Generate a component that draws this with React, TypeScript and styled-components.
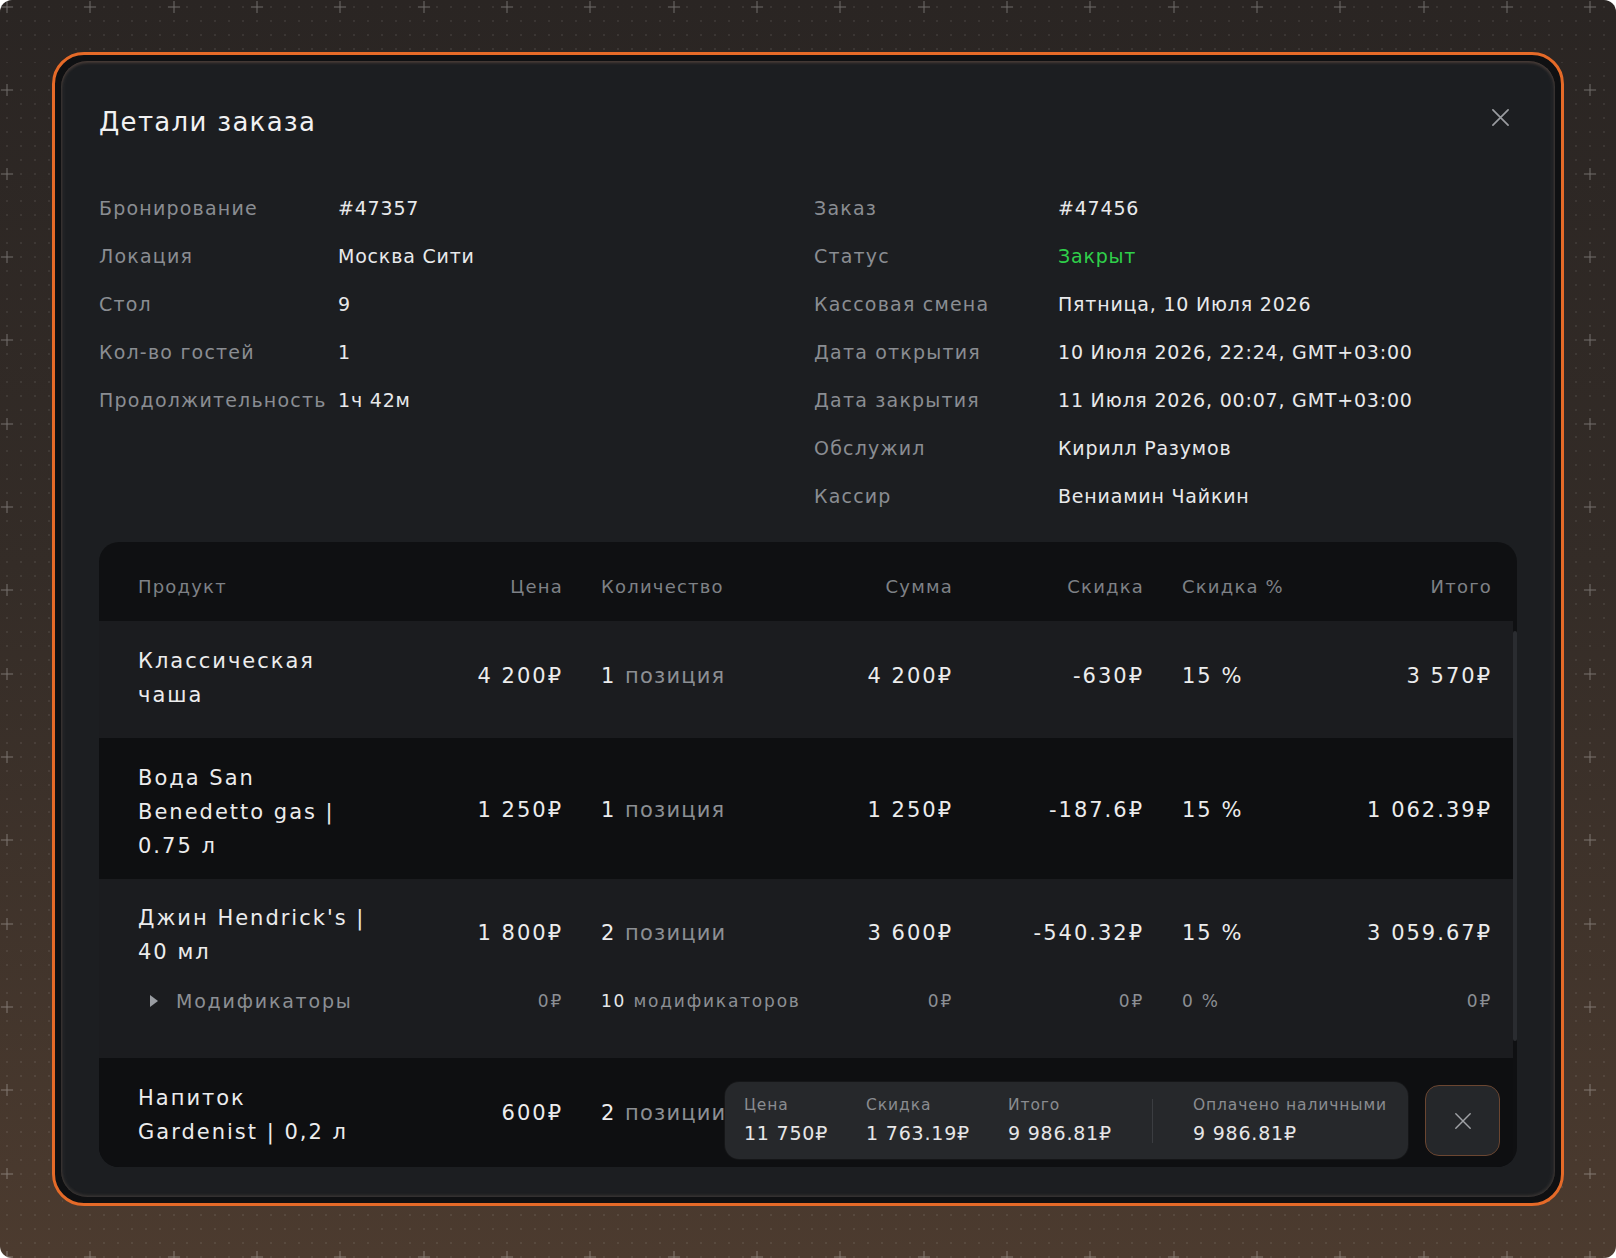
import React from "react";
import styled, { createGlobalStyle } from "styled-components";

const GlobalStyle = createGlobalStyle`
  html, body {
    margin: 0;
    padding: 0;
    background: #ffffff;
  }
  body {
    font-family: "DejaVu Sans", "Noto Sans", sans-serif;
  }
`;

// background grid: faint dots with a cross every sixth dot
const TILE = 83.333;
const STEP = TILE / 6;
const buildPattern = () => {
  let dots = "";
  for (let i = 0; i < 6; i++) {
    for (let j = 0; j < 6; j++) {
      if (i === 0 && j === 0) continue;
      const x = STEP / 2 + i * STEP - 0.6;
      const y = STEP / 2 + j * STEP - 0.6;
      dots += `<rect x='${x}' y='${y}' width='1.2' height='1.2' fill='white' fill-opacity='0.2'/>`;
    }
  }
  const c = STEP / 2;
  const cross = `<path d='M${c - 6} ${c}H${c + 6}M${c} ${c - 6}V${c + 6}' stroke='white' stroke-opacity='0.32' stroke-width='1'/>`;
  const svg = `<svg xmlns='http://www.w3.org/2000/svg' width='${TILE}' height='${TILE}'>${dots}${cross}</svg>`;
  return `url("data:image/svg+xml,${encodeURIComponent(svg)}")`;
};

const COLS = "222px 165px 199px 115px 153px 118px 154px";

const Page = styled.div`
  width: 1616px;
  height: 1258px;
  box-sizing: border-box;
  padding: 52px;
  border-radius: 12px;
  overflow: hidden;
  background: ${buildPattern()} 0 0 / ${TILE}px ${TILE}px,
    linear-gradient(180deg, #2a2523 0%, #342c27 45%, #4c3b2f 100%);
`;

const Frame = styled.div`
  height: 100%;
  box-sizing: border-box;
  border: 3px solid #e56a28;
  border-radius: 32px;
  background: #0f1012;
  padding: 6px;
`;

const Panel = styled.div`
  height: 100%;
  box-sizing: border-box;
  border-radius: 26px;
  background: #1c1e21;
  padding: 44px 38px 30px;
  display: flex;
  flex-direction: column;
  box-shadow: inset 0 2px 3px rgba(214, 150, 120, 0.22),
    inset 0 -2px 3px rgba(150, 120, 100, 0.18),
    inset 3px 0 4px rgba(255, 255, 255, 0.04),
    inset -3px 0 4px rgba(255, 255, 255, 0.04);
`;

const Header = styled.div`
  display: flex;
  justify-content: space-between;
  align-items: flex-start;
  height: 34px;
`;

const Title = styled.h1`
  margin: 0;
  font-size: 26px;
  font-weight: 400;
  line-height: 34px;
  letter-spacing: 1.3px;
  color: #f1f1f2;
`;

const IconButton = styled.button`
  width: 34px;
  height: 34px;
  margin-top: -5px;
  padding: 0;
  border: none;
  background: transparent;
  display: grid;
  place-items: center;
  cursor: pointer;
`;

const InfoGrid = styled.div`
  margin-top: 57px;
  display: grid;
  grid-template-columns: 715px 1fr;
`;

const InfoColumn = styled.dl<{ $labelWidth: number }>`
  margin: 0;
  display: grid;
  grid-template-columns: ${(p) => p.$labelWidth}px 1fr;
  row-gap: 24px;
  align-content: start;
  font-size: 19px;
  line-height: 24px;
`;

const Label = styled.dt`
  color: #8a8d92;
  letter-spacing: 1.2px;
`;

const Value = styled.dd<{ $accent?: boolean }>`
  margin: 0;
  letter-spacing: 0.8px;
  color: ${(p) => (p.$accent ? "#2fd04a" : "#e8e9eb")};
`;

const Table = styled.div`
  position: relative;
  margin-top: 34px;
  flex: 1;
  min-height: 0;
  display: flex;
  flex-direction: column;
  border-radius: 20px;
  overflow: hidden;
  background: #0f1012;
`;

const HeadRow = styled.div`
  display: grid;
  grid-template-columns: ${COLS};
  column-gap: 38px;
  align-items: center;
  flex-shrink: 0;
  box-sizing: border-box;
  height: 79px;
  padding: 10px 25px 0 39px;
  font-size: 18px;
  letter-spacing: 1.2px;
  color: #7e8186;
`;

const Cell = styled.div<{ $align?: "right" }>`
  text-align: ${(p) => p.$align ?? "left"};
  white-space: nowrap;
`;

const Body = styled.div`
  flex: 1;
  min-height: 0;
  display: flex;
  overflow: hidden;
`;

const Rows = styled.div`
  flex: 1;
  display: flex;
  flex-direction: column;
`;

const ScrollTrack = styled.div`
  width: 4px;
  padding-top: 10px;
  flex-shrink: 0;
`;

const ScrollThumb = styled.div`
  height: 410px;
  border-radius: 2px;
  background: #2a2c30;
`;

const RowBlock = styled.div<{ $dark?: boolean; $withMods?: boolean }>`
  flex-shrink: 0;
  box-sizing: border-box;
  min-height: 117px;
  display: flex;
  flex-direction: column;
  justify-content: flex-start;
  padding: ${(p) => (p.$withMods ? "22px 21px 43px 39px" : "23px 21px 16px 39px")};
  background: ${(p) => (p.$dark ? "#0e0f11" : "#1b1c1f")};
`;

const MainLine = styled.div`
  display: grid;
  grid-template-columns: ${COLS};
  column-gap: 38px;
  align-items: center;
  font-size: 21px;
  line-height: 34px;
  letter-spacing: 2px;
  color: #ececed;
`;

const ProductName = styled.div`
  display: flex;
  flex-direction: column;
  white-space: nowrap;
`;

const Figure = styled(Cell)`
  margin-top: -5px;
`;

const Muted = styled.span`
  color: #8c8f94;
  letter-spacing: 1.2px;
`;

const ModLine = styled.div`
  margin-top: 18px;
  display: grid;
  grid-template-columns: ${COLS};
  column-gap: 38px;
  align-items: center;
  font-size: 17px;
  line-height: 28px;
  letter-spacing: 1.8px;
  color: #8c8f94;
`;

const ModTitle = styled.div`
  display: flex;
  align-items: center;
  gap: 18px;
  padding-left: 12px;
  font-size: 19px;
  letter-spacing: 1.8px;
  white-space: nowrap;
`;

const Caret = styled.span`
  width: 0;
  height: 0;
  border-top: 6px solid transparent;
  border-bottom: 6px solid transparent;
  border-left: 8px solid #9a9da2;
`;

const White = styled.span`
  color: #e6e7e9;
`;

const Overlay = styled.div`
  position: absolute;
  right: 17px;
  bottom: 8px;
  display: flex;
  align-items: center;
  gap: 17px;
`;

const SummaryBar = styled.div`
  height: 77px;
  box-sizing: border-box;
  padding: 0 21px 0 19px;
  display: flex;
  align-items: center;
  gap: 38px;
  border-radius: 14px;
  background: #26282b;
  box-shadow: 0 0 0 1px rgba(255, 255, 255, 0.03);
`;

const Stat = styled.div`
  display: flex;
  flex-direction: column;
  gap: 7px;
`;

const StatLabel = styled.span`
  font-size: 15.5px;
  line-height: 18px;
  letter-spacing: 0.9px;
  color: #8a8c90;
`;

const StatValue = styled.span`
  font-size: 19px;
  line-height: 24px;
  letter-spacing: 0.8px;
  color: #e6e6e7;
`;

const Divider = styled.div`
  width: 1px;
  height: 44px;
  margin: 0 2px;
  background: #3b3d41;
`;

const CloseSquare = styled.button`
  width: 75px;
  height: 71px;
  padding: 0;
  border-radius: 14px;
  border: 1px solid #6b4631;
  background: #25272a;
  display: grid;
  place-items: center;
  cursor: pointer;
`;

const XIcon: React.FC<{ size: number; color: string; width?: number }> = ({ size, color, width = 1.8 }) => (
  <svg width={size} height={size} viewBox="0 0 20 20" fill="none">
    <path d="M2 2L18 18M18 2L2 18" stroke={color} strokeWidth={width} strokeLinecap="round" />
  </svg>
);

type Item = {
  name: string[];
  price: string;
  count: string;
  unit: string;
  sum: string;
  discount: string;
  pct: string;
  total: string;
  mods?: boolean;
};

// the last row's right-hand cells sit under the summary bar, so they stay empty
const items: Item[] = [
  { name: ["Классическая", "чаша"], price: "4 200₽", count: "1", unit: "позиция", sum: "4 200₽", discount: "-630₽", pct: "15 %", total: "3 570₽" },
  { name: ["Вода San", "Benedetto gas |", "0.75 л"], price: "1 250₽", count: "1", unit: "позиция", sum: "1 250₽", discount: "-187.6₽", pct: "15 %", total: "1 062.39₽" },
  { name: ["Джин Hendrick's |", "40 мл"], price: "1 800₽", count: "2", unit: "позиции", sum: "3 600₽", discount: "-540.32₽", pct: "15 %", total: "3 059.67₽", mods: true },
  { name: ["Напиток", "Gardenist | 0,2 л"], price: "600₽", count: "2", unit: "позиции", sum: "", discount: "", pct: "", total: "" },
];

const leftInfo: [string, string][] = [
  ["Бронирование", "#47357"],
  ["Локация", "Москва Сити"],
  ["Стол", "9"],
  ["Кол-во гостей", "1"],
  ["Продолжительность", "1ч 42м"],
];

const rightInfo: [string, string][] = [
  ["Заказ", "#47456"],
  ["Статус", "Закрыт"],
  ["Кассовая смена", "Пятница, 10 Июля 2026"],
  ["Дата открытия", "10 Июля 2026, 22:24, GMT+03:00"],
  ["Дата закрытия", "11 Июля 2026, 00:07, GMT+03:00"],
  ["Обслужил", "Кирилл Разумов"],
  ["Кассир", "Вениамин Чайкин"],
];

const stats = [
  ["Цена", "11 750₽"],
  ["Скидка", "1 763.19₽"],
  ["Итого", "9 986.81₽"],
];

const App: React.FC = () => {
  return (
    <>
      <GlobalStyle />
      <Page>
        <Frame>
          <Panel>
            <Header>
              <Title>Детали заказа</Title>
              <IconButton aria-label="Закрыть">
                <XIcon size={19} color="#9a9ca0" />
              </IconButton>
            </Header>

            <InfoGrid>
              <InfoColumn $labelWidth={239}>
                {leftInfo.map(([k, v]) => (
                  <React.Fragment key={k}>
                    <Label>{k}</Label>
                    <Value>{v}</Value>
                  </React.Fragment>
                ))}
              </InfoColumn>
              <InfoColumn $labelWidth={244}>
                {rightInfo.map(([k, v]) => (
                  <React.Fragment key={k}>
                    <Label>{k}</Label>
                    <Value $accent={k === "Статус"}>{v}</Value>
                  </React.Fragment>
                ))}
              </InfoColumn>
            </InfoGrid>

            <Table>
              <HeadRow>
                <Cell>Продукт</Cell>
                <Cell $align="right">Цена</Cell>
                <Cell>Количество</Cell>
                <Cell $align="right">Сумма</Cell>
                <Cell $align="right">Скидка</Cell>
                <Cell>Скидка %</Cell>
                <Cell $align="right">Итого</Cell>
              </HeadRow>
              <Body>
                <Rows>
                  {items.map((it, i) => (
                    <RowBlock key={i} $dark={i % 2 === 1} $withMods={it.mods}>
                      <MainLine>
                        <ProductName>
                          {it.name.map((line) => (
                            <span key={line}>{line}</span>
                          ))}
                        </ProductName>
                        <Figure $align="right">{it.price}</Figure>
                        <Figure>
                          {it.count} <Muted>{it.unit}</Muted>
                        </Figure>
                        <Figure $align="right">{it.sum}</Figure>
                        <Figure $align="right">{it.discount}</Figure>
                        <Figure>{it.pct}</Figure>
                        <Figure $align="right">{it.total}</Figure>
                      </MainLine>
                      {it.mods && (
                        <ModLine>
                          <ModTitle>
                            <Caret />
                            Модификаторы
                          </ModTitle>
                          <Cell $align="right">0₽</Cell>
                          <Cell>
                            <White>10</White> модификаторов
                          </Cell>
                          <Cell $align="right">0₽</Cell>
                          <Cell $align="right">0₽</Cell>
                          <Cell>0 %</Cell>
                          <Cell $align="right">0₽</Cell>
                        </ModLine>
                      )}
                    </RowBlock>
                  ))}
                </Rows>
                <ScrollTrack>
                  <ScrollThumb />
                </ScrollTrack>
              </Body>

              <Overlay>
                <SummaryBar>
                  {stats.map(([k, v]) => (
                    <Stat key={k}>
                      <StatLabel>{k}</StatLabel>
                      <StatValue>{v}</StatValue>
                    </Stat>
                  ))}
                  <Divider />
                  <Stat>
                    <StatLabel>Оплачено наличными</StatLabel>
                    <StatValue>9 986.81₽</StatValue>
                  </Stat>
                </SummaryBar>
                <CloseSquare aria-label="Закрыть итоги">
                  <XIcon size={18} color="#a0a2a6" width={1.6} />
                </CloseSquare>
              </Overlay>
            </Table>
          </Panel>
        </Frame>
      </Page>
    </>
  );
};

export default App;
